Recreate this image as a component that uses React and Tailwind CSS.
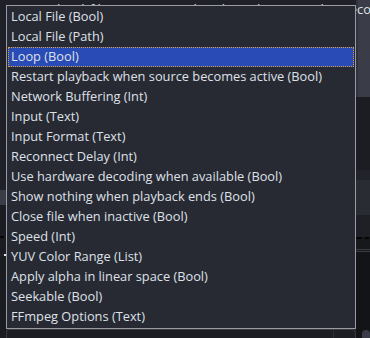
import React from "react";

const items = [
  "Local File (Bool)",
  "Local File (Path)",
  "Loop (Bool)",
  "Restart playback when source becomes active (Bool)",
  "Network Buffering (Int)",
  "Input (Text)",
  "Input Format (Text)",
  "Reconnect Delay (Int)",
  "Use hardware decoding when available (Bool)",
  "Show nothing when playback ends (Bool)",
  "Close file when inactive (Bool)",
  "Speed (Int)",
  "YUV Color Range (List)",
  "Apply alpha in linear space (Bool)",
  "Seekable (Bool)",
  "FFmpeg Options (Text)",
];

export default function App() {
  return (
    <div
      className="relative w-[370px] h-[338px] overflow-hidden bg-[#1f2028] text-[#dfe1e8]"
      style={{ fontFamily: '"Open Sans", "Noto Sans", sans-serif' }}
    >
      {/* background app */}
      <div className="flex h-full">
        <div className="w-[6px] flex flex-col">
          <div className="h-[190px] bg-[#1f2028]" />
          <div className="h-[15px] bg-[#3a3d47]" />
          <div className="h-[31px] bg-[#1b1c21]" />
          <div className="h-[2px] w-[4px] bg-[#050505]" />
          <div className="h-[16px] bg-[#1b1c21]" />
          <div className="h-[2px] w-[2px] ml-[4px] bg-[#e6e6e6]" />
          <div className="flex-1 bg-[#1b1c21]" />
        </div>
        <div className="flex-1 flex flex-col">
          <div className="flex-1" />
          <div className="h-[9px] flex border border-b-0 border-[#3a3c44] rounded-t-[4px] bg-[#1d1e24]">
            <div className="flex-1" />
            <div className="w-[22px] border-l border-[#2c2e35]" />
          </div>
        </div>
        <div className="w-[14px] flex flex-col">
          <div className="h-[97px] flex">
            <div className="w-[2px] bg-[#30333c]" />
            <div className="flex-1 bg-[#3a3d47]" />
          </div>
          <div className="h-[73px] bg-[#1c1d22]" />
          <div className="h-[10px] bg-[#22232a]" />
          <div className="h-[35px] bg-[#2a2c34]" />
          <div className="h-[22px] bg-[#1f2026]" />
          <div className="h-[2px] bg-[#17181c] flex gap-[3px]">
            <div className="w-[6px] bg-[#050505]" />
            <div className="w-[4px] bg-[#050505]" />
          </div>
          <div className="h-[10px] bg-[#17181c]" />
          <div className="h-[1px] bg-[#3a3c44]" />
          <div className="h-[1px] bg-[#17181c]" />
          <div className="h-[1px] bg-[#3a3c44]" />
          <div className="flex-1 bg-[#131417] flex items-end">
            <div className="ml-[6px] w-[10px] h-[8px] rounded-t-[4px] bg-[#3a3d47]" />
          </div>
        </div>
      </div>

      {/* editor text line behind the popup */}
      <div className="absolute left-0 top-[3px] w-[357px] text-right whitespace-nowrap text-[12.8px] leading-[13px] overflow-hidden">
        "local_file": "C:\\Users\\dawid\\Desktop\\Render_Re
      </div>
      <div className="absolute left-[357px] top-[3px] whitespace-nowrap text-[12.8px] leading-[13px]">
        cording.mp4",
      </div>

      {/* popup list */}
      <div className="absolute left-[6px] top-[5px] w-[350px] border border-[#9a9ca3] bg-[#272a33] p-[1px]">
        {items.map((t, i) => (
          <div
            key={i}
            className={
              "h-[20px] flex items-center pl-[3px] text-[12.8px] whitespace-nowrap " +
              (i === 2
                ? "bg-[#284bb6] outline-1 outline-dotted outline-[#e0a03a] -outline-offset-1"
                : "")
            }
          >
            {t}
          </div>
        ))}
      </div>
    </div>
  );
}
